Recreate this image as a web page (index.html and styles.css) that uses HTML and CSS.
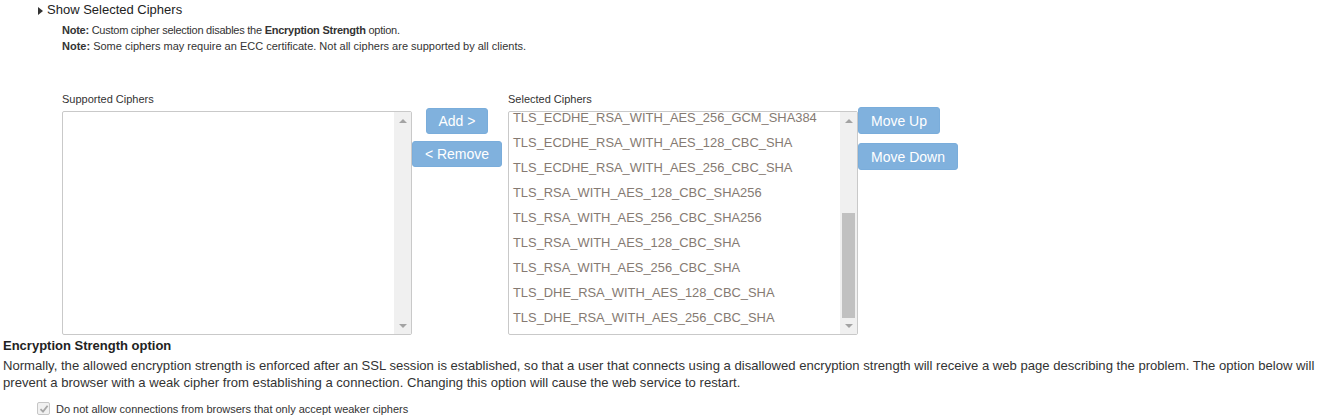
FILE: index.html
```html
<!DOCTYPE html>
<html>
<head>
<meta charset="utf-8">
<link rel="stylesheet" href="styles.css">
</head>
<body>
<div class="page">
  <div class="toggle"><span class="tri"></span>Show Selected Ciphers</div>
  <div class="notes">
    <div class="note-tight"><b>Note:</b> Custom cipher selection disables the <b>Encryption Strength</b> option.</div>
    <div><b>Note:</b> Some ciphers may require an ECC certificate. Not all ciphers are supported by all clients.</div>
  </div>
  <div class="ciphers">
    <div class="col">
      <div class="label">Supported Ciphers</div>
      <div class="listbox">
        <div class="items"></div>
        <div class="sbar"><span class="up"></span><span class="track"></span><span class="down"></span></div>
      </div>
    </div>
    <div class="mid">
      <button class="btn add">Add &gt;</button>
      <button class="btn remove">&lt; Remove</button>
    </div>
    <div class="col">
      <div class="label">Selected Ciphers</div>
      <div class="listbox">
        <div class="items">
          <div class="list scrolled">
            <div>TLS_ECDHE_RSA_WITH_AES_256_GCM_SHA384</div>
            <div>TLS_ECDHE_RSA_WITH_AES_128_CBC_SHA</div>
            <div>TLS_ECDHE_RSA_WITH_AES_256_CBC_SHA</div>
            <div>TLS_RSA_WITH_AES_128_CBC_SHA256</div>
            <div>TLS_RSA_WITH_AES_256_CBC_SHA256</div>
            <div>TLS_RSA_WITH_AES_128_CBC_SHA</div>
            <div>TLS_RSA_WITH_AES_256_CBC_SHA</div>
            <div>TLS_DHE_RSA_WITH_AES_128_CBC_SHA</div>
            <div>TLS_DHE_RSA_WITH_AES_256_CBC_SHA</div>
          </div>
        </div>
        <div class="sbar"><span class="up"></span><span class="track"><span class="thumb"></span></span><span class="down"></span></div>
      </div>
    </div>
    <div class="right">
      <button class="btn moveup">Move Up</button>
      <button class="btn movedown">Move Down</button>
    </div>
  </div>
  <div class="enc">
    <div class="enc-title">Encryption Strength option</div>
    <p class="enc-text">Normally, the allowed encryption strength is enforced after an SSL session is established, so that a user that connects using a disallowed encryption strength will receive a web page describing the problem. The option below will prevent a browser with a weak cipher from establishing a connection. Changing this option will cause the web service to restart.</p>
    <div class="check">
      <span class="cbox"><svg width="10" height="10" viewBox="0 0 10 10"><path d="M1.5 5.2 L4 7.6 L8.6 1.8" fill="none" stroke="#a6a6a6" stroke-width="1.8"/></svg></span>
      <span>Do not allow connections from browsers that only accept weaker ciphers</span>
    </div>
  </div>
</div>
</body>
</html>
```

FILE: styles.css
```css
html, body {
  margin: 0;
  padding: 0;
  background: #fff;
}
body {
  font-family: "Liberation Sans", Arial, sans-serif;
  color: #333;
}
.page {
  padding: 2px 0 0 3px;
  width: 1338px;
}
.toggle {
  margin-left: 35px;
  font-size: 13px;
  line-height: 16px;
  display: flex;
  align-items: center;
  color: #222;
}
.tri {
  width: 0;
  height: 0;
  border-top: 4px solid transparent;
  border-bottom: 4px solid transparent;
  border-left: 5px solid #333;
  margin-right: 4px;
  margin-top: 1px;
}
.notes {
  margin: 4px 0 0 59px;
  font-size: 11px;
  line-height: 16px;
  color: #333;
}
.note-tight {
  letter-spacing: -0.25px;
}
.ciphers {
  display: flex;
  margin: 38px 0 0 59px;
}
.col {
  display: flex;
  flex-direction: column;
}
.label {
  font-size: 11px;
  line-height: 14px;
  height: 19px;
  color: #333;
}
.listbox {
  width: 350px;
  height: 224px;
  box-sizing: border-box;
  border: 1px solid #c9c9c9;
  border-radius: 2px;
  display: flex;
  overflow: hidden;
  background: #fff;
}
.items {
  flex: 1;
  overflow: hidden;
  padding-left: 4px;
}
.list {
  font-size: 12.9px;
  line-height: 25px;
  color: #857a72;
  white-space: nowrap;
}
.list.scrolled {
  margin-top: -7px;
}
.sbar {
  width: 17px;
  background: #f0f0f0;
  display: flex;
  flex-direction: column;
  align-items: center;
}
.up, .down {
  height: 17px;
  width: 17px;
  display: flex;
  align-items: center;
  justify-content: center;
  flex: none;
}
.up::before {
  content: "";
  border-left: 4px solid transparent;
  border-right: 4px solid transparent;
  border-bottom: 4px solid #a3a3a3;
}
.down::before {
  content: "";
  border-left: 4px solid transparent;
  border-right: 4px solid transparent;
  border-top: 4px solid #a3a3a3;
}
.track {
  flex: 1;
  width: 100%;
  display: flex;
  flex-direction: column;
  justify-content: flex-end;
  align-items: center;
}
.thumb {
  width: 13px;
  height: 105px;
  background: #c1c1c1;
  margin-bottom: -1px;
}
.btn {
  font-family: "Liberation Sans", Arial, sans-serif;
  font-size: 14px;
  color: #fff;
  background: #80b1dd;
  border: 1px solid #7aaddb;
  border-radius: 3px;
  padding: 0 12px;
  height: 26px;
  line-height: 24px;
  cursor: pointer;
}
.mid {
  width: 90px;
  margin: 16px 6px 0 0;
  display: flex;
  flex-direction: column;
  align-items: center;
  gap: 7px;
}
.add { width: 62px; padding: 0; }
.remove { width: 90px; padding: 0; }
.right {
  margin-top: 15px;
  display: flex;
  flex-direction: column;
  align-items: flex-start;
  gap: 9px;
}
.moveup { width: 82px; height: 27px; padding: 0; }
.movedown { width: 100px; height: 27px; padding: 0; }
.enc {
  margin-top: 3px;
}
.enc-title {
  font-size: 13px;
  font-weight: bold;
  line-height: 16px;
  color: #222;
}
.enc-text {
  margin: 3px 0 0 0;
  font-size: 13.1px;
  line-height: 17px;
  color: #333;
}
.check {
  margin: 11px 0 0 34px;
  display: flex;
  align-items: center;
  font-size: 11px;
  color: #333;
}
.cbox {
  width: 11px;
  height: 11px;
  border: 1px solid #c6c6c6;
  border-radius: 2px;
  background: #f1f1f1;
  display: flex;
  align-items: center;
  justify-content: center;
  margin-right: 6px;
}
```
